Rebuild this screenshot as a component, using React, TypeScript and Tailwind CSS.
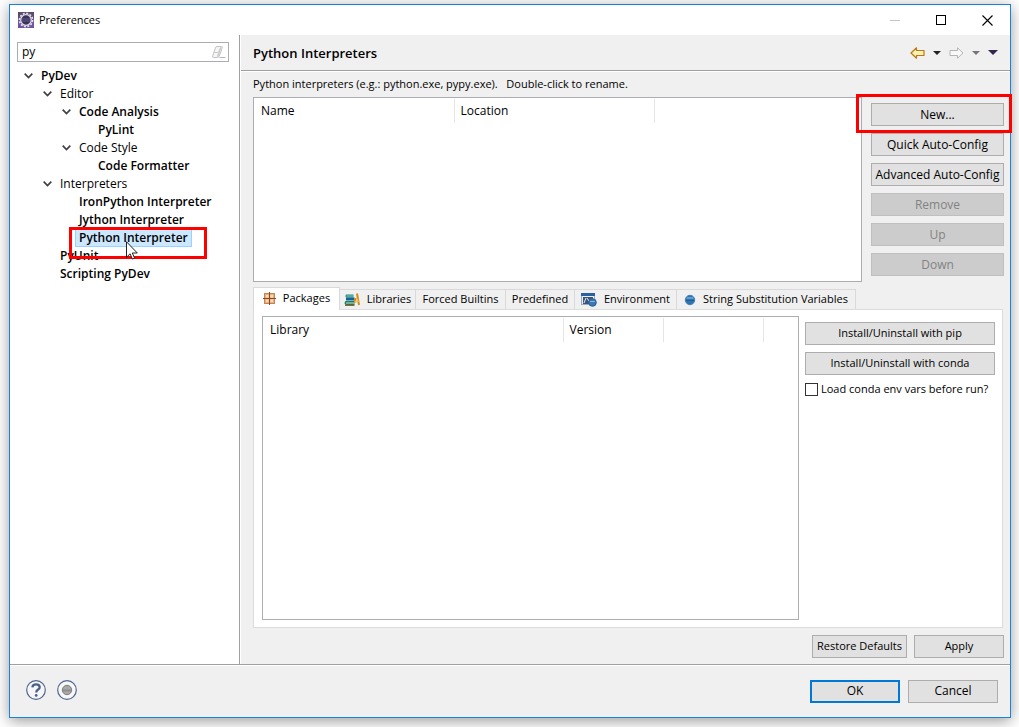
import { useState } from "react";

import clsx from "clsx";

// =====================================================
//  Data
// =====================================================
type TreeItem = { label: string; level: number; bold?: boolean; open?: boolean };

const tree: TreeItem[] = [
  { label: "PyDev", level: 0, bold: true, open: true },
  { label: "Editor", level: 1, open: true },
  { label: "Code Analysis", level: 2, bold: true, open: true },
  { label: "PyLint", level: 3, bold: true },
  { label: "Code Style", level: 2, open: true },
  { label: "Code Formatter", level: 3, bold: true },
  { label: "Interpreters", level: 1, open: true },
  { label: "IronPython Interpreter", level: 2, bold: true },
  { label: "Jython Interpreter", level: 2, bold: true },
  { label: "Python Interpreter", level: 2, bold: true },
  { label: "PyUnit", level: 1, bold: true },
  { label: "Scripting PyDev", level: 1, bold: true },
];

const indents = ["pl-0", "pl-[19px]", "pl-[38px]", "pl-[57px]"];

const tabs = [
  { label: "Packages", icon: <PackageIcon />, width: "w-[87px]" },
  { label: "Libraries", icon: <BooksIcon />, width: "w-[77px]" },
  { label: "Forced Builtins", icon: null, width: "w-[91px]" },
  { label: "Predefined", icon: null, width: "w-[70px]" },
  { label: "Environment", icon: <EnvironmentIcon />, width: "w-[103px]" },
  { label: "String Substitution Variables", icon: <DotIcon />, width: "w-[180px]" },
];

// =====================================================
//  Icons
// =====================================================
function EclipseIcon() {
  return (
    <svg width="16" height="16" viewBox="0 0 16 16" aria-hidden="true">
      <rect width="16" height="16" fill="#6f55a0" />
      <path d="M0 0h16v7H0z" fill="#5b4a6c" />
      <circle cx="8" cy="8" r="6.6" fill="none" stroke="#e6e2ea" strokeWidth="1.600" strokeDasharray="2 1.456" />
      <circle cx="8" cy="8" r="5.300" fill="#3a3358" stroke="#dedbe2" strokeWidth="1.300" />
      <path d="M4 7h8M4 9h8" stroke="#615890" strokeWidth="1" />
    </svg>
  );
}

function EraserIcon() {
  return (
    <svg width="14" height="14" viewBox="0 0 14 14" aria-hidden="true">
      <path d="M5 1.500h4.500q1.200 0 .8 1.100L7.200 11.300q-.4 1.200-1.600 1.200H1.700q-1.500 0-1-1.500l2.700-8q.4-1.500 1.600-1.500z" fill="#f6f6f6" stroke="#c2c2c2" />
      <path d="M6 7.500L8 2.300h1.800L6.600 11.500 4.800 12z" fill="#cdcdcd" />
      <path d="M2.200 7.500h3.600" stroke="#c8c8c8" />
      <path d="M7.500 12.500h6" stroke="#b5b5b5" />
    </svg>
  );
}

function Chevron() {
  return (
    <svg width="9" height="6" viewBox="0 0 9 6" aria-hidden="true">
      <path d="M.7.7l3.800 3.800L8.300.7" fill="none" stroke="#404040" strokeWidth="1.700" />
    </svg>
  );
}

function ArrowIcon({ forward }: { forward?: boolean }) {
  return (
    <svg width="15" height="12" viewBox="0 0 15 12" aria-hidden="true">
      {forward ? (
        <path d="M14 6L8.500.800V3.500H1v5h7.500v2.700z" fill="#f8f8f8" stroke="#b4b4b4" strokeLinejoin="round" />
      ) : (
        <path d="M1 6L6.500.800V3.500H14v5H6.500v2.700z" fill="#fdf0b0" stroke="#b87a14" strokeWidth="1.200" strokeLinejoin="round" />
      )}
    </svg>
  );
}

function Triangle({ color, wide }: { color: string; wide?: boolean }) {
  return (
    <svg width={wide ? 10 : 8} height={wide ? 5 : 4} viewBox="0 0 8 4" aria-hidden="true">
      <path d="M0 0h8L4 4z" fill={color} />
    </svg>
  );
}

function PackageIcon() {
  return (
    <svg width="13" height="13" viewBox="0 0 13 13" className="shrink-0" aria-hidden="true">
      <rect x="1.500" y="1.500" width="10" height="10" fill="#e6b083" stroke="#c98350" />
      <path d="M3 3h2.500v2.500H3zM7.500 3H10v2.500H7.500zM3 7.500h2.500V10H3zM7.500 7.500H10V10H7.500z" fill="#f8dcbc" />
      <path d="M6.500 0v13M0 6.500h13" stroke="#8a4a1c" />
    </svg>
  );
}

function BooksIcon() {
  return (
    <svg width="16" height="13" viewBox="0 0 16 13" className="shrink-0" aria-hidden="true">
      <path d="M2 1.500h7.500v3H2q-1.300-1.500 0-3z" fill="#1f8a78" />
      <path d="M2.500 3h7" stroke="#7fd0bd" />
      <path d="M2 4.500h8.500v3H2z" fill="#1d5c9c" />
      <path d="M1.500 8h9v4h-9q-1.800-2 0-4z" fill="#16805f" />
      <path d="M2 10h8.500" stroke="#c5e8d8" />
      <path d="M1 12.500h9.500" stroke="#b0582a" />
      <path d="M11.500 5l-.5 4.500M13 .5l2 11.500" fill="none" stroke="#d58a10" strokeWidth="2" />
      <path d="M11 8l2 1M12.500 5l2 4" fill="none" stroke="#f6c350" strokeWidth="1.200" />
    </svg>
  );
}

function EnvironmentIcon() {
  return (
    <svg width="16" height="14" viewBox="0 0 16 14" className="shrink-0" aria-hidden="true">
      <rect x=".5" y=".5" width="13" height="11" fill="#e8eef6" stroke="#9aa9c0" />
      <path d="M0 0h14v3H0z" fill="#2c5f9e" />
      <path d="M2 4h10v7H2z" fill="#3c5478" />
      <path d="M3 10l2-5M6 5l2 3" stroke="#dfe8f2" />
      <circle cx="11.500" cy="9.500" r="3.800" fill="#3b78b4" stroke="#2a5c94" />
      <path d="M9 8.500h5" stroke="#8ab4dc" />
    </svg>
  );
}

function DotIcon() {
  return (
    <svg width="12" height="12" viewBox="0 0 12 12" className="shrink-0" aria-hidden="true">
      <circle cx="6" cy="6" r="4.700" fill="#2f73b0" stroke="#3f7fba" />
      <path d="M2.500 4.500h7M3 3.500h6" stroke="#5f9ccf" />
      <path d="M2 6.500h8" stroke="#1f5c98" />
    </svg>
  );
}

function Cursor() {
  return (
    <svg width="12" height="19" viewBox="0 0 12 19" aria-hidden="true">
      <path d="M.5.8v15.500l3.600-3.500 2.300 5.300 2.200-1-2.300-5.100h5z" fill="#fff" stroke="#222" />
    </svg>
  );
}

// =====================================================
//  Button
// =====================================================
function Button({ className, ...props }: React.ComponentProps<"button">) {
  return (
    <button
      type="button"
      className={clsx(
        "flex h-[23px] items-center justify-center whitespace-nowrap border border-[#adadad] bg-[#e1e1e1] text-black disabled:border-[#bfbfbf] disabled:bg-[#cccccc] disabled:text-[#838383]",
        className
      )}
      {...props}
    />
  );
}

// =====================================================
//  Tree
// =====================================================
function PreferenceTree() {
  const [selected, setSelected] = useState("Python Interpreter");

  return (
    <ul className="mt-[5px] pl-2">
      {tree.map((item) => (
        <li key={item.label} className={clsx("flex h-[18px]", indents[item.level])}>
          <span className="flex w-[19px] shrink-0 items-center justify-end pr-1">
            {item.open && <Chevron />}
          </span>
          <div className="relative">
            <button
              type="button"
              onClick={() => setSelected(item.label)}
              className={clsx(
                "flex h-[18px] items-center whitespace-nowrap border px-[3px]",
                item.bold && "font-semibold",
                item.label === selected ? "border-[#99d1ff] bg-[#cce8ff]" : "border-transparent"
              )}
            >
              {item.label}
            </button>
            {item.label === "Python Interpreter" && (
              <>
                <span className="pointer-events-none absolute -left-1.5 -top-0.5 z-10 h-8 w-[138px] border-3 border-[#ff0000]" />
                <span className="pointer-events-none absolute left-[51px] top-3 z-10">
                  <Cursor />
                </span>
              </>
            )}
          </div>
        </li>
      ))}
    </ul>
  );
}

// =====================================================
//  Page
// =====================================================
export default function App() {
  const [filter, setFilter] = useState("py");
  const [activeTab, setActiveTab] = useState("Packages");
  const [loadConda, setLoadConda] = useState(false);

  return (
    <div className="flex min-h-screen bg-white pb-[9px] pl-[9px] pr-2 pt-1 font-['Open_Sans','Noto_Sans',sans-serif] text-xs text-black">
      <div className="flex flex-1 flex-col border border-[#1883d7] bg-[#f0f0f0] shadow-[0_3px_14px_rgba(0,0,0,0.4)]">
        {/* Title bar */}
        <header className="flex h-[30px] items-center bg-white pl-2">
          <EclipseIcon />
          <h1 className="ml-[5px] flex-1 text-[11px]">Preferences</h1>
          <button type="button" aria-label="Minimize" className="flex h-full w-[46px] items-center justify-center">
            <span className="h-px w-2.5 bg-[#c4c4c4]" />
          </button>
          <button type="button" aria-label="Maximize" className="flex h-full w-[46px] items-center justify-center">
            <span className="size-2.5 border border-black" />
          </button>
          <button type="button" aria-label="Close" className="flex h-full w-[46px] items-center justify-center">
            <svg width="11" height="11" viewBox="0 0 11 11" aria-hidden="true">
              <path d="M.5.5l10 10M10.500.5l-10 10" stroke="#000" strokeWidth="1.100" />
            </svg>
          </button>
        </header>

        <div className="flex flex-1">
          {/* Sidebar */}
          <nav className="w-[230px] shrink-0 border-r border-[#a0a0a0] bg-white pt-[7px]">
            <div className="ml-[7px] mr-2.5 flex h-5 items-center border border-[#abadb3] pl-1 pr-0.5">
              <input
                type="text"
                aria-label="Filter preferences"
                value={filter}
                onChange={(e) => setFilter(e.target.value)}
                className="min-w-0 flex-1 outline-none"
              />
              <button type="button" aria-label="Clear filter">
                <EraserIcon />
              </button>
            </div>
            <PreferenceTree />
          </nav>

          {/* Content */}
          <main className="flex min-w-0 flex-1 flex-col border-l border-white">
            <div className="flex h-9 items-center border-b border-[#a0a0a0] pl-3 pr-3">
              <h2 className="flex-1 pt-[3px] text-[13px] font-semibold">Python Interpreters</h2>
              <div className="flex items-center">
                <button type="button" aria-label="Back"><ArrowIcon /></button>
                <button type="button" aria-label="Back history" className="ml-2"><Triangle color="#222222" /></button>
                <button type="button" aria-label="Forward" className="ml-2"><ArrowIcon forward /></button>
                <button type="button" aria-label="Forward history" className="ml-2"><Triangle color="#77737c" /></button>
                <button type="button" aria-label="Menu" className="ml-2"><Triangle color="#35254f" wide /></button>
              </div>
            </div>

            <div className="flex flex-1 flex-col border-t border-white pl-3 pr-1.5">
              <p className="flex h-[25px] items-center whitespace-pre text-[11px]">
                {"Python interpreters (e.g.: python.exe, pypy.exe).   Double-click to rename."}
              </p>

              {/* Interpreters */}
              <div className="flex gap-[9px]">
                <div className="h-[185px] min-w-0 flex-1 border border-[#abadb3] bg-white pt-px">
                  <table className="w-full table-fixed text-left">
                    <thead>
                      <tr className="h-6">
                        <th className="w-[200px] border-r border-[#e5e5e5] pl-[7px] font-normal">Name</th>
                        <th className="w-[200px] border-r border-[#e5e5e5] pl-1.5 font-normal">Location</th>
                        <td />
                      </tr>
                    </thead>
                  </table>
                </div>

                <div className="flex w-[133px] flex-col gap-[7px] pt-1.5">
                  <div className="relative">
                    <Button className="w-full">New...</Button>
                    <span className="pointer-events-none absolute -bottom-[7px] -left-[15px] -right-2 -top-[9px] z-10 border-3 border-[#ff0000]" />
                  </div>
                  <Button>Quick Auto-Config</Button>
                  <Button>Advanced Auto-Config</Button>
                  <Button disabled>Remove</Button>
                  <Button disabled>Up</Button>
                  <Button disabled>Down</Button>
                </div>
              </div>

              {/* Tabs */}
              <div role="tablist" className="mt-[5px] flex items-end text-[11px]">
                {tabs.map((tab) => (
                  <button
                    key={tab.label}
                    type="button"
                    role="tab"
                    aria-selected={tab.label === activeTab}
                    onClick={() => setActiveTab(tab.label)}
                    className={clsx(
                      "-mr-px flex items-center justify-center gap-[7px] whitespace-nowrap border border-b-0 border-[#d9d9d9]",
                      tab.width,
                      tab.label === activeTab ? "relative -mb-px h-[23px] bg-white pb-0.5" : "h-5"
                    )}
                  >
                    {tab.icon}
                    {tab.label}
                  </button>
                ))}
              </div>

              <div role="tabpanel" className="mr-px flex flex-1 gap-1.5 border border-[#dcdcdc] bg-white pb-[7px] pl-2 pr-[7px] pt-1.5">
                <div className="min-w-0 flex-1 border border-[#abadb3] pt-px">
                  <table className="w-full table-fixed text-left">
                    <thead>
                      <tr className="h-6">
                        <th className="w-[300px] border-r border-[#e5e5e5] pl-[7px] font-normal">Library</th>
                        <th className="w-[100px] border-r border-[#e5e5e5] pl-1.5 font-normal">Version</th>
                        <td className="w-[100px] border-r border-[#e5e5e5]" />
                        <td />
                      </tr>
                    </thead>
                  </table>
                </div>

                <div className="flex w-[190px] flex-col gap-[7px] pt-1.5 text-[11px]">
                  <Button>Install/Uninstall with pip</Button>
                  <Button>Install/Uninstall with conda</Button>
                  <label className="flex h-3.5 items-center gap-[3px] whitespace-nowrap">
                    <input
                      type="checkbox"
                      checked={loadConda}
                      onChange={(e) => setLoadConda(e.target.checked)}
                      className="size-[13px] shrink-0 appearance-none border border-[#333333] bg-white checked:bg-[#333333]"
                    />
                    Load conda env vars before run?
                  </label>
                </div>
              </div>

              <div className="flex justify-end gap-[7px] pb-1.5 pt-[7px] text-[11px]">
                <Button className="w-[95px]">Restore Defaults</Button>
                <Button className="w-[90px]">Apply</Button>
              </div>
            </div>
          </main>
        </div>

        {/* Footer */}
        <footer className="flex h-[53px] items-center border-t border-[#a0a0a0] pl-4 pr-3 shadow-[inset_0_1px_0_#ffffff]">
          <div className="flex gap-[11px] pb-0.5">
            <button type="button" aria-label="Help">
              <svg width="20" height="20" viewBox="0 0 20 20" aria-hidden="true">
                <circle cx="10" cy="10" r="9.300" fill="#f6f6f8" stroke="#52668c" strokeWidth="1.200" />
                <path d="M6.400 7.300q.2-3 3.700-3t3.600 2.900q0 1.500-1.900 2.600-1.500.9-1.500 2.700" fill="none" stroke="#4a5f8a" strokeWidth="2.300" />
                <circle cx="10.200" cy="15.400" r="1.400" fill="#4a5f8a" />
              </svg>
            </button>
            <button type="button" aria-label="Record">
              <svg width="20" height="20" viewBox="0 0 20 20" aria-hidden="true">
                <circle cx="10" cy="10" r="9.300" fill="#f8f8f8" stroke="#52668c" strokeWidth="1.200" />
                <circle cx="10" cy="10" r="4.700" fill="#a8a8a8" stroke="#7e7e7e" />
                <path d="M6 10.500h8" stroke="#8f8f8f" strokeWidth="2" />
              </svg>
            </button>
          </div>
          <div className="ml-auto flex gap-2">
            <button type="button" className="flex h-[23px] w-[90px] items-center justify-center border-2 border-[#0078d7] bg-[#e1e1e1]">
              OK
            </button>
            <Button className="w-[90px]">Cancel</Button>
          </div>
        </footer>
      </div>
    </div>
  );
}
